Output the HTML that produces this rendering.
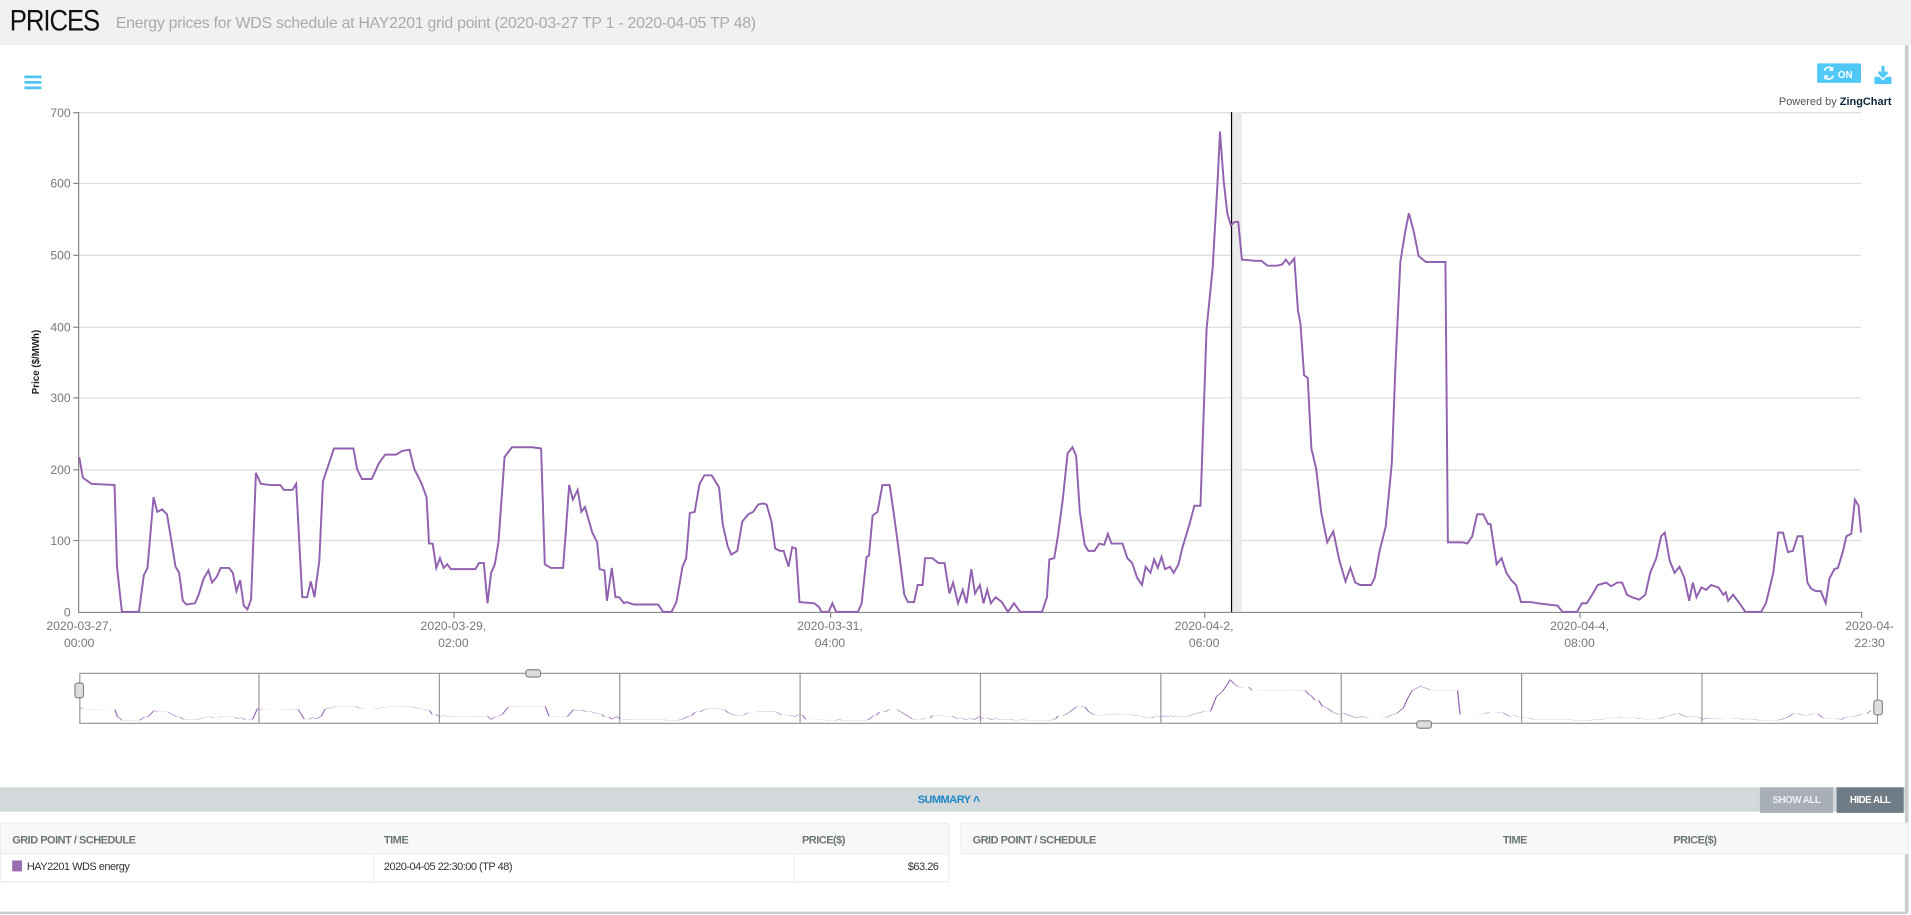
<!DOCTYPE html>
<html><head><meta charset="utf-8"><style>
html,body{margin:0;padding:0;width:1911px;height:915px;overflow:hidden;background:#fff}
#w{position:absolute;left:0;top:0;width:1568px;height:751px;transform:scale(1.21875);transform-origin:0 0;font-family:"Liberation Sans",sans-serif}
.hdr{position:absolute;left:0;top:0;width:1568px;height:37px;background:#f1f1f1}
.t{position:absolute;left:8px;top:4px;font-size:24px;color:#111;letter-spacing:-1px;transform:scaleX(0.88);transform-origin:0 0}
.st{position:absolute;left:95px;top:11px;font-size:13px;color:#aaa;letter-spacing:-0.2px}
.edge{position:absolute;left:1563px;top:37px;width:3px;height:712px;background:#ccc}
.bot{position:absolute;left:0;top:748px;width:1565px;height:2px;background:#ccc}
.c{font-size:9px;color:#666;letter-spacing:-0.4px;position:absolute}
.bar{position:absolute;left:0;top:646px;width:1563px;height:20px;background:#d3d9db}
.tb{position:absolute;border:1px solid #eee;background:#fff}
.th{background:#f8f8f8;height:24px;border-bottom:1px solid #eee}
</style></head><body><div id="w">
<div class="hdr"><div class="t">PRICES</div><div class="st">Energy prices for WDS schedule at HAY2201 grid point (2020-03-27 TP 1 - 2020-04-05 TP 48)</div></div>
<div class="edge"></div><div class="bot"></div>
<svg style="position:absolute;left:0;top:0" width="1568" height="640" viewBox="0 0 1568 640">
<g fill="#4fc3f7"><rect x="20" y="62" width="14" height="2.2"/><rect x="20" y="66.5" width="14" height="2.2"/><rect x="20" y="71" width="14" height="2.2"/></g>
<rect x="1491" y="52" width="36" height="16" rx="1" fill="#50c8f8"/>
<path d="M1497 58 a3.5 3.5 0 0 1 6.5 -1 M1503.5 55 v2.5 h-2.5 M1504 62 a3.5 3.5 0 0 1 -6.5 1 M1497.5 65 v-2.5 h2.5" stroke="#fff" stroke-width="1.4" fill="none"/>
<text x="1508" y="64" font-size="8" font-weight="bold" fill="#fff">ON</text>
<path d="M1545 54 v8 M1541.5 59 l3.5 3.5 l3.5 -3.5" stroke="#50c8f8" stroke-width="2.5" fill="none"/>
<path d="M1538 63 h4 l3 3 l3 -3 h4 v6 h-14z" fill="#50c8f8"/>
<text x="1552" y="86" font-size="9" fill="#555" text-anchor="end">Powered by <tspan font-weight="bold" fill="#0b2538">ZingChart</tspan></text>
<g stroke="#ddd" stroke-width="1"><line x1="65" y1="92.5" x2="1527" y2="92.5"/><line x1="65" y1="150.5" x2="1527" y2="150.5"/><line x1="65" y1="209.5" x2="1527" y2="209.5"/><line x1="65" y1="268.5" x2="1527" y2="268.5"/><line x1="65" y1="326.5" x2="1527" y2="326.5"/><line x1="65" y1="385.5" x2="1527" y2="385.5"/><line x1="65" y1="443.5" x2="1527" y2="443.5"/></g>
<line x1="64.5" y1="92" x2="64.5" y2="503" stroke="#888"/><line x1="64" y1="502.5" x2="1527" y2="502.5" stroke="#888"/>
<g stroke="#888"><line x1="60" y1="92.5" x2="65" y2="92.5"/><line x1="60" y1="150.5" x2="65" y2="150.5"/><line x1="60" y1="209.5" x2="65" y2="209.5"/><line x1="60" y1="268.5" x2="65" y2="268.5"/><line x1="60" y1="326.5" x2="65" y2="326.5"/><line x1="60" y1="385.5" x2="65" y2="385.5"/><line x1="60" y1="443.5" x2="65" y2="443.5"/><line x1="372.5" y1="502" x2="372.5" y2="507"/><line x1="681.5" y1="502" x2="681.5" y2="507"/><line x1="988.5" y1="502" x2="988.5" y2="507"/><line x1="1296.5" y1="502" x2="1296.5" y2="507"/><line x1="1527.5" y1="502" x2="1527.5" y2="507"/></g>
<g font-size="10" fill="#777" text-anchor="end"><text x="58" y="96">700</text><text x="58" y="154">600</text><text x="58" y="213">500</text><text x="58" y="272">400</text><text x="58" y="330">300</text><text x="58" y="389">200</text><text x="58" y="447">100</text><text x="58" y="506">0</text></g>
<text transform="translate(32,297) rotate(-90)" font-size="8" font-weight="bold" fill="#222" text-anchor="middle">Price ($/MWh)</text>
<g font-size="10" fill="#777" text-anchor="middle"><text x="65" y="517">2020-03-27,</text><text x="65" y="531">00:00</text><text x="372" y="517">2020-03-29,</text><text x="372" y="531">02:00</text><text x="681" y="517">2020-03-31,</text><text x="681" y="531">04:00</text><text x="988" y="517">2020-04-2,</text><text x="988" y="531">06:00</text><text x="1296" y="517">2020-04-4,</text><text x="1296" y="531">08:00</text><text x="1534" y="517">2020-04-</text><text x="1534" y="531">22:30</text></g>
<rect x="1011" y="92" width="8" height="410" fill="#ebebeb"/>
<line x1="1010.5" y1="92" x2="1010.5" y2="502" stroke="#000"/>
<defs><polyline id="d" fill="none" points="65,375 68,392 75,397 94,398 96,465 100,502 114,502 118,472 121,466 126,408 129,420 133,418 137,422 140,440 144,465 147,470 150,493 153,496 160,495 163,488 167,475 171,468 174,478 178,473 181,466 188,466 191,470 194,485 197,476 200,497 203,500 206,492 210,388 214,397 222,398 230,398 233,402 240,402 243,397 248,490 252,490 255,477 258,490 262,460 265,395 270,380 274,368 290,368 293,385 297,393 305,393 311,380 316,373 325,373 330,370 336,369 340,385 346,397 350,408 352,446 355,446 358,466 361,458 364,466 367,463 370,467 390,467 393,462 397,462 400,495 403,470 406,463 409,445 414,375 420,367 437,367 444,368 447,463 452,466 462,466 464,440 467,398 470,410 474,402 477,420 480,416 486,437 490,445 492,467 496,468 498,493 502,466 505,490 508,490 512,495 514,494 520,496 540,496 544,502 551,502 555,494 560,465 563,458 566,421 570,420 574,397 578,390 584,390 590,400 593,430 597,448 600,455 605,452 609,428 614,422 618,420 622,414 626,413 629,414 633,428 636,450 640,452 643,452 647,465 650,449 653,450 656,494 668,495 672,498 674,502 680,502 683,495 686,502 704,502 707,495 711,457 713,456 716,423 720,420 724,398 730,398 734,426 738,456 742,488 745,494 750,494 753,480 757,480 759,458 765,458 770,462 775,462 779,487 782,478 786,495 790,484 793,495 797,467 800,487 804,480 807,495 810,484 813,495 817,490 822,494 827,502 832,495 837,502 855,502 859,490 861,459 865,458 868,440 872,410 876,372 880,367 883,374 886,420 890,447 893,452 898,452 902,446 906,447 909,438 912,446 921,446 925,458 929,462 933,474 937,480 940,465 944,470 947,459 950,466 953,457 956,467 960,465 963,470 967,463 970,450 973,440 976,430 980,415 985,415 990,270 995,220 999,150 1001,108 1004,148 1007,175 1010,185 1013,182 1016,182 1019,213 1030,214 1035,214 1040,218 1048,218 1052,217 1055,213 1058,217 1062,212 1065,255 1067,265 1070,308 1073,310 1076,368 1080,385 1084,420 1089,445 1094,436 1099,460 1104,477 1108,466 1112,478 1116,480 1125,480 1128,474 1132,452 1137,432 1142,380 1145,300 1149,215 1153,190 1156,175 1160,190 1164,210 1170,215 1182,215 1186,215 1188,445 1200,445 1204,446 1208,440 1212,422 1217,422 1221,430 1223,430 1228,463 1232,458 1236,470 1240,476 1244,480 1248,494 1256,494 1262,495 1270,496 1278,497 1282,502 1294,502 1298,495 1302,495 1307,487 1311,480 1318,478 1322,481 1327,478 1331,478 1335,488 1339,490 1345,492 1350,488 1354,470 1359,458 1363,440 1366,437 1370,460 1374,470 1378,465 1382,474 1386,493 1389,478 1392,490 1396,482 1400,484 1404,480 1410,482 1414,488 1416,486 1418,493 1422,488 1428,496 1432,502 1445,502 1449,495 1455,470 1459,437 1463,437 1467,453 1471,452 1475,440 1479,440 1483,478 1486,483 1490,485 1494,485 1498,495 1501,475 1505,467 1508,466 1512,453 1515,440 1519,438 1522,410 1525,415 1527,437"/></defs>
<use href="#d" stroke="#9162b0" stroke-width="1.6"/>
<rect x="65.5" y="552.5" width="1475" height="41" fill="none" stroke="#999"/>
<g stroke="#999"><line x1="212.5" y1="552" x2="212.5" y2="593"/><line x1="360.5" y1="552" x2="360.5" y2="593"/><line x1="508.5" y1="552" x2="508.5" y2="593"/><line x1="656.5" y1="552" x2="656.5" y2="593"/><line x1="804.5" y1="552" x2="804.5" y2="593"/><line x1="952.5" y1="552" x2="952.5" y2="593"/><line x1="1100.5" y1="552" x2="1100.5" y2="593"/><line x1="1248.5" y1="552" x2="1248.5" y2="593"/><line x1="1396.5" y1="552" x2="1396.5" y2="593"/></g>
<g transform="translate(65,591) scale(1.0089,0.085) translate(-65,-502)"><use href="#d" stroke="#9162b0" stroke-width="1" vector-effect="non-scaling-stroke"/></g>
<g fill="#ddd" stroke="#888" stroke-width="1"><rect x="61.5" y="560.5" width="7" height="12" rx="2"/><rect x="1537.5" y="574.5" width="7" height="12" rx="2"/><rect x="431.5" y="549.5" width="12" height="6" rx="2"/><rect x="1162.5" y="591.5" width="12" height="6" rx="2"/></g>
</svg>
<div class="bar"></div>
<div style="position:absolute;left:753px;top:651px;font-size:9px;font-weight:bold;color:#1a86c6;letter-spacing:-0.4px">SUMMARY <span style="font-size:10px">&#708;</span></div>
<div style="position:absolute;left:1444px;top:646px;width:60px;height:21px;background:#a8b0b5;color:#eef;font-size:8px;font-weight:bold;text-align:center;line-height:21px;letter-spacing:-0.4px">SHOW ALL</div>
<div style="position:absolute;left:1507px;top:646px;width:55px;height:21px;background:#6f7c85;color:#fff;font-size:8px;font-weight:bold;text-align:center;line-height:21px;letter-spacing:-0.4px">HIDE ALL</div>
<div class="tb" style="left:0;top:675px;width:777px;height:47px">
<div class="th"></div>
<div style="position:absolute;left:305px;top:25px;width:1px;height:22px;background:#eee"></div>
<div style="position:absolute;left:650px;top:25px;width:1px;height:22px;background:#eee"></div>
<div class="c" style="left:9px;top:8px;font-weight:bold;color:#6b7478">GRID POINT / SCHEDULE</div>
<div class="c" style="left:314px;top:8px;font-weight:bold;color:#6b7478">TIME</div>
<div class="c" style="left:657px;top:8px;font-weight:bold;color:#6b7478">PRICE($)</div>
<div style="position:absolute;left:9px;top:30px;width:8px;height:9px;background:#9a6cb0"></div>
<div class="c" style="left:21px;top:30px;color:#333">HAY2201 WDS energy</div>
<div class="c" style="left:314px;top:30px;color:#333">2020-04-05 22:30:00 (TP 48)</div>
<div class="c" style="right:8px;top:30px;color:#333">$63.26</div>
</div>
<div class="tb" style="left:788px;top:675px;width:776px;height:24px;background:#f8f8f8">
<div class="c" style="left:9px;top:8px;font-weight:bold;color:#6b7478">GRID POINT / SCHEDULE</div>
<div class="c" style="left:444px;top:8px;font-weight:bold;color:#6b7478">TIME</div>
<div class="c" style="left:584px;top:8px;font-weight:bold;color:#6b7478">PRICE($)</div>
</div>
</div></body></html>
